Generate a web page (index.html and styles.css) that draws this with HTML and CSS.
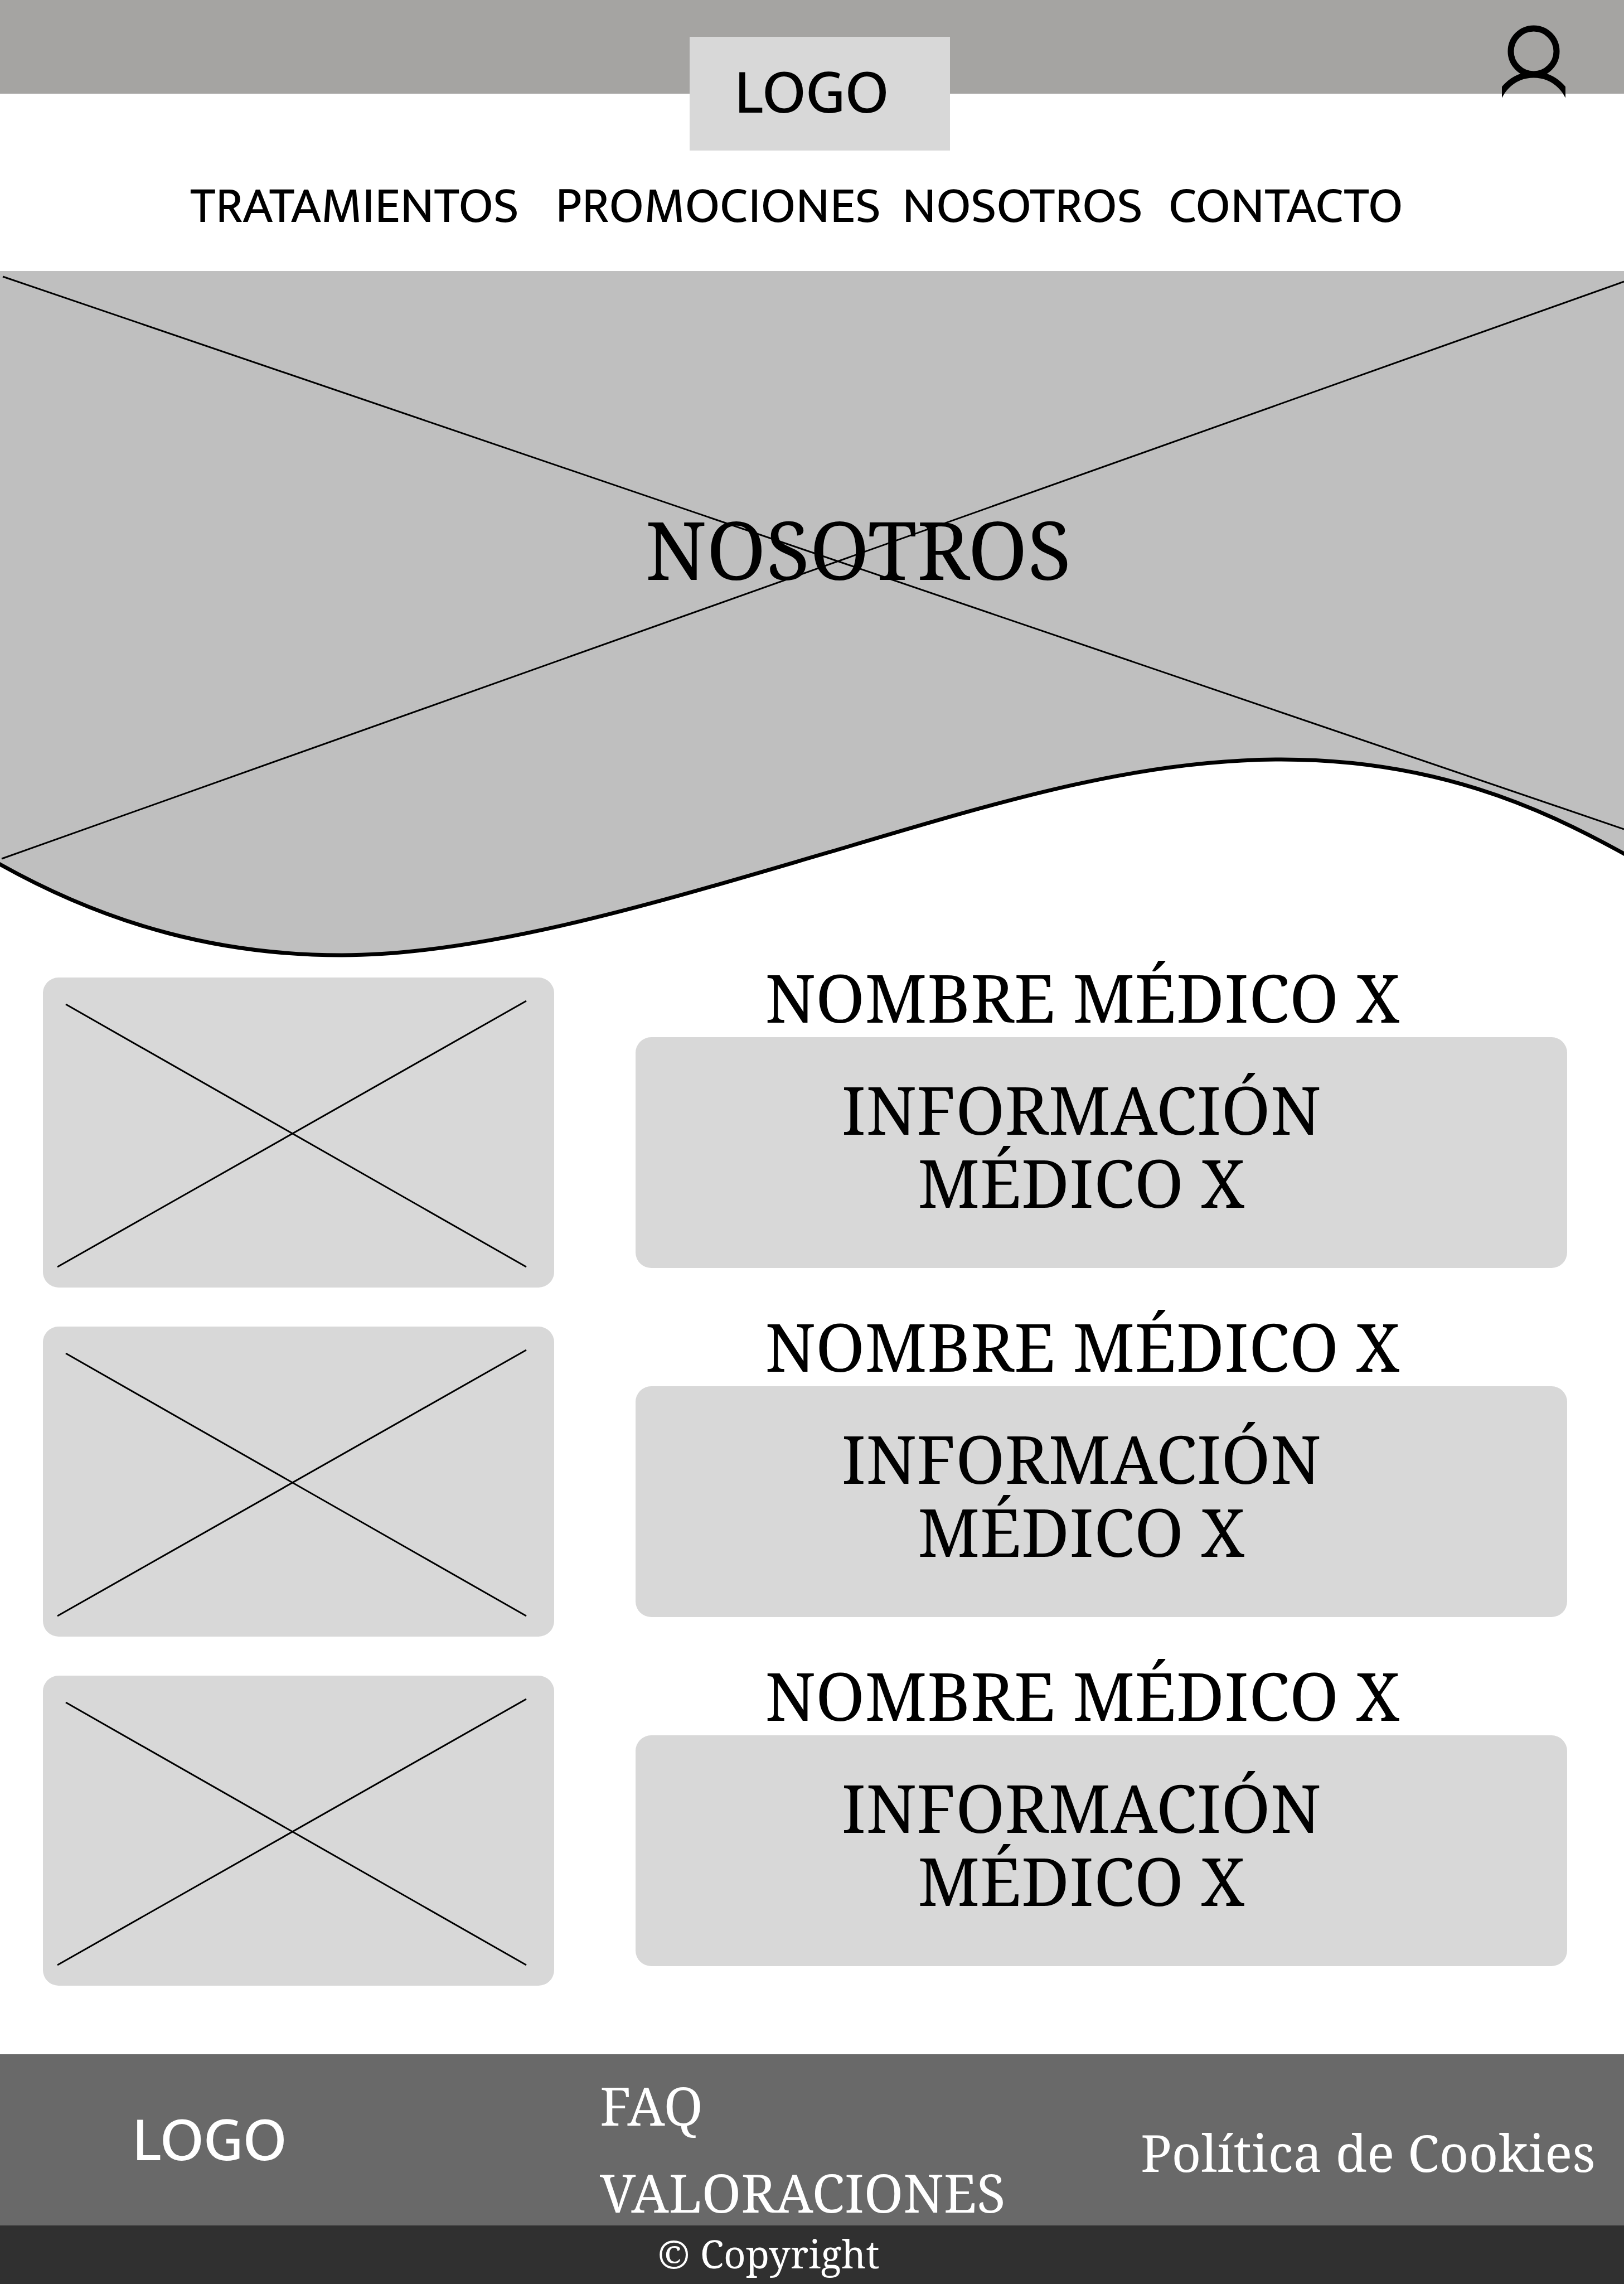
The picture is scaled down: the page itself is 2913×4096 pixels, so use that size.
FILE: index.html
```html
<!DOCTYPE html>
<html lang="es">
<head>
<meta charset="utf-8">
<meta name="viewport" content="width=device-width, initial-scale=1">
<title>Nosotros</title>
<link rel="stylesheet" href="styles.css">
</head>
<body>
<header>
  <div class="topbar">
    <a class="logo topbar-logo" href="#">LOGO</a>
    <a class="account" href="#" aria-label="Mi cuenta">
      <svg class="account-icon" viewBox="0 0 114 130" aria-hidden="true">
        <circle cx="57" cy="47" r="41"/>
        <circle cx="57" cy="157" r="68"/>
      </svg>
    </a>
  </div>
  <nav class="nav" aria-label="Principal">
    <a href="#">TRATAMIENTOS</a>
    <a href="#">PROMOCIONES</a>
    <a href="#">NOSOTROS</a>
    <a href="#">CONTACTO</a>
  </nav>
</header>

<main>
  <section class="hero">
    <svg class="hero-image" viewBox="0 486 2913 1234" aria-hidden="true">
      <path class="hero-shape" d="M0 486H2913V1531C2760 1446 2570 1362 2298 1362C2040 1362 1795 1437 1502 1524C1210 1609 880 1713 613 1713C400 1713 200 1662 0 1550Z"/>
      <path class="hero-wave" d="M-20 1538L0 1550C200 1662 400 1713 613 1713C880 1713 1210 1609 1502 1524C1795 1437 2040 1362 2298 1362C2570 1362 2760 1446 2913 1531L2933 1543"/>
      <path class="cross" d="M5 496L2913 1487M3 1540L2913 505"/>
    </svg>
    <h1 class="hero-title">NOSOTROS</h1>
  </section>

  <section class="team">
    <article class="doctor">
      <svg class="photo" viewBox="0 0 917 556" role="img" aria-label="Foto del médico">
        <path class="cross" d="M41 48L867 519M26 519L867 42"/>
      </svg>
      <div class="details">
        <h2 class="name">NOMBRE MÉDICO X</h2>
        <p class="info">INFORMACIÓN<br>MÉDICO X</p>
      </div>
    </article>
    <article class="doctor">
      <svg class="photo" viewBox="0 0 917 556" role="img" aria-label="Foto del médico">
        <path class="cross" d="M41 48L867 519M26 519L867 42"/>
      </svg>
      <div class="details">
        <h2 class="name">NOMBRE MÉDICO X</h2>
        <p class="info">INFORMACIÓN<br>MÉDICO X</p>
      </div>
    </article>
    <article class="doctor">
      <svg class="photo" viewBox="0 0 917 556" role="img" aria-label="Foto del médico">
        <path class="cross" d="M41 48L867 519M26 519L867 42"/>
      </svg>
      <div class="details">
        <h2 class="name">NOMBRE MÉDICO X</h2>
        <p class="info">INFORMACIÓN<br>MÉDICO X</p>
      </div>
    </article>
  </section>
</main>

<footer>
  <div class="footer-main">
    <a class="logo footer-logo" href="#">LOGO</a>
    <div class="footer-links">
      <a href="#">FAQ</a>
      <a href="#">VALORACIONES</a>
    </div>
    <a class="footer-policy" href="#">Política de Cookies</a>
  </div>
  <p class="copyright">© Copyright</p>
</footer>
</body>
</html>
```
FILE: styles.css
```css
* {
  box-sizing: border-box;
}

body {
  margin: 0;
  background: #fff;
  color: #000;
  font-family: "Noto Serif", "Liberation Serif", serif;
}

h1, h2, p {
  margin: 0;
  font-weight: 400;
}

a {
  color: inherit;
  text-decoration: none;
}

svg {
  display: block;
}

.cross {
  fill: none;
  stroke: #000;
  stroke-width: 3;
}

.logo,
.nav {
  font-family: Mukta, "Noto Sans", sans-serif;
}

.logo {
  font-size: 114px;
}

/* Header */

.topbar {
  display: grid;
  grid-template-columns: 1fr 467px 1fr;
  height: 168px;
  padding: 0 105px 0 133px;
  background: #a5a4a2;
}

.topbar-logo {
  grid-column: 2;
  height: 204px;
  margin-top: 66px;
  padding-left: 80px;
  background: #d8d8d8;
  line-height: 204px;
}

.account {
  justify-self: end;
  margin-top: 45px;
}

.account-icon {
  width: 114px;
  height: 130px;
  fill: none;
  stroke: #000;
  stroke-width: 11;
}

.nav {
  display: grid;
  grid-template-columns: 655fr 622fr 478fr 817fr;
  padding: 153px 0 65px 341px;
  font-size: 91px;
  line-height: 100px;
}

/* Hero */

.hero {
  display: grid;
}

.hero-image,
.hero-title {
  grid-area: 1 / 1;
}

.hero-image {
  width: 100%;
}

.hero-shape {
  fill: #bfbfbf;
}

.hero-wave {
  fill: none;
  stroke: #000;
  stroke-width: 7;
}

.hero-title {
  padding: 398px 0 0 166px;
  font-size: 144px;
  line-height: 200px;
  text-align: center;
}

/* Doctors */

.team {
  display: grid;
  gap: 40px;
  padding: 3px 102px 123px 77px;
}

.doctor {
  display: grid;
  grid-template-columns: 917fr 1671fr;
  column-gap: 146px;
}

.photo {
  width: 100%;
  margin-top: 30px;
  border-radius: 28px;
  background: #d8d8d8;
}

.name,
.info {
  font-size: 119px;
  line-height: 131px;
  text-align: center;
}

.name {
  padding-right: 68px;
}

.info {
  margin-top: 6px;
  padding: 64px 72px 88px 0;
  border-radius: 28px;
  background: #d8d8d8;
}

/* Footer */

.footer-main {
  display: grid;
  grid-template-columns: 839fr 970fr 867fr;
  padding-left: 237px;
  background: #696969;
  color: #fff;
  font-size: 95px;
  line-height: 120px;
}

.footer-logo {
  padding-top: 96px;
}

.footer-links {
  display: grid;
  justify-items: start;
  gap: 36px;
  padding-top: 31px;
}

.footer-policy {
  padding-top: 116px;
  font-size: 92px;
}

.copyright {
  padding: 0 156px 5px 0;
  background: #303030;
  color: #fff;
  font-size: 69px;
  line-height: 100px;
  text-align: center;
}
```
